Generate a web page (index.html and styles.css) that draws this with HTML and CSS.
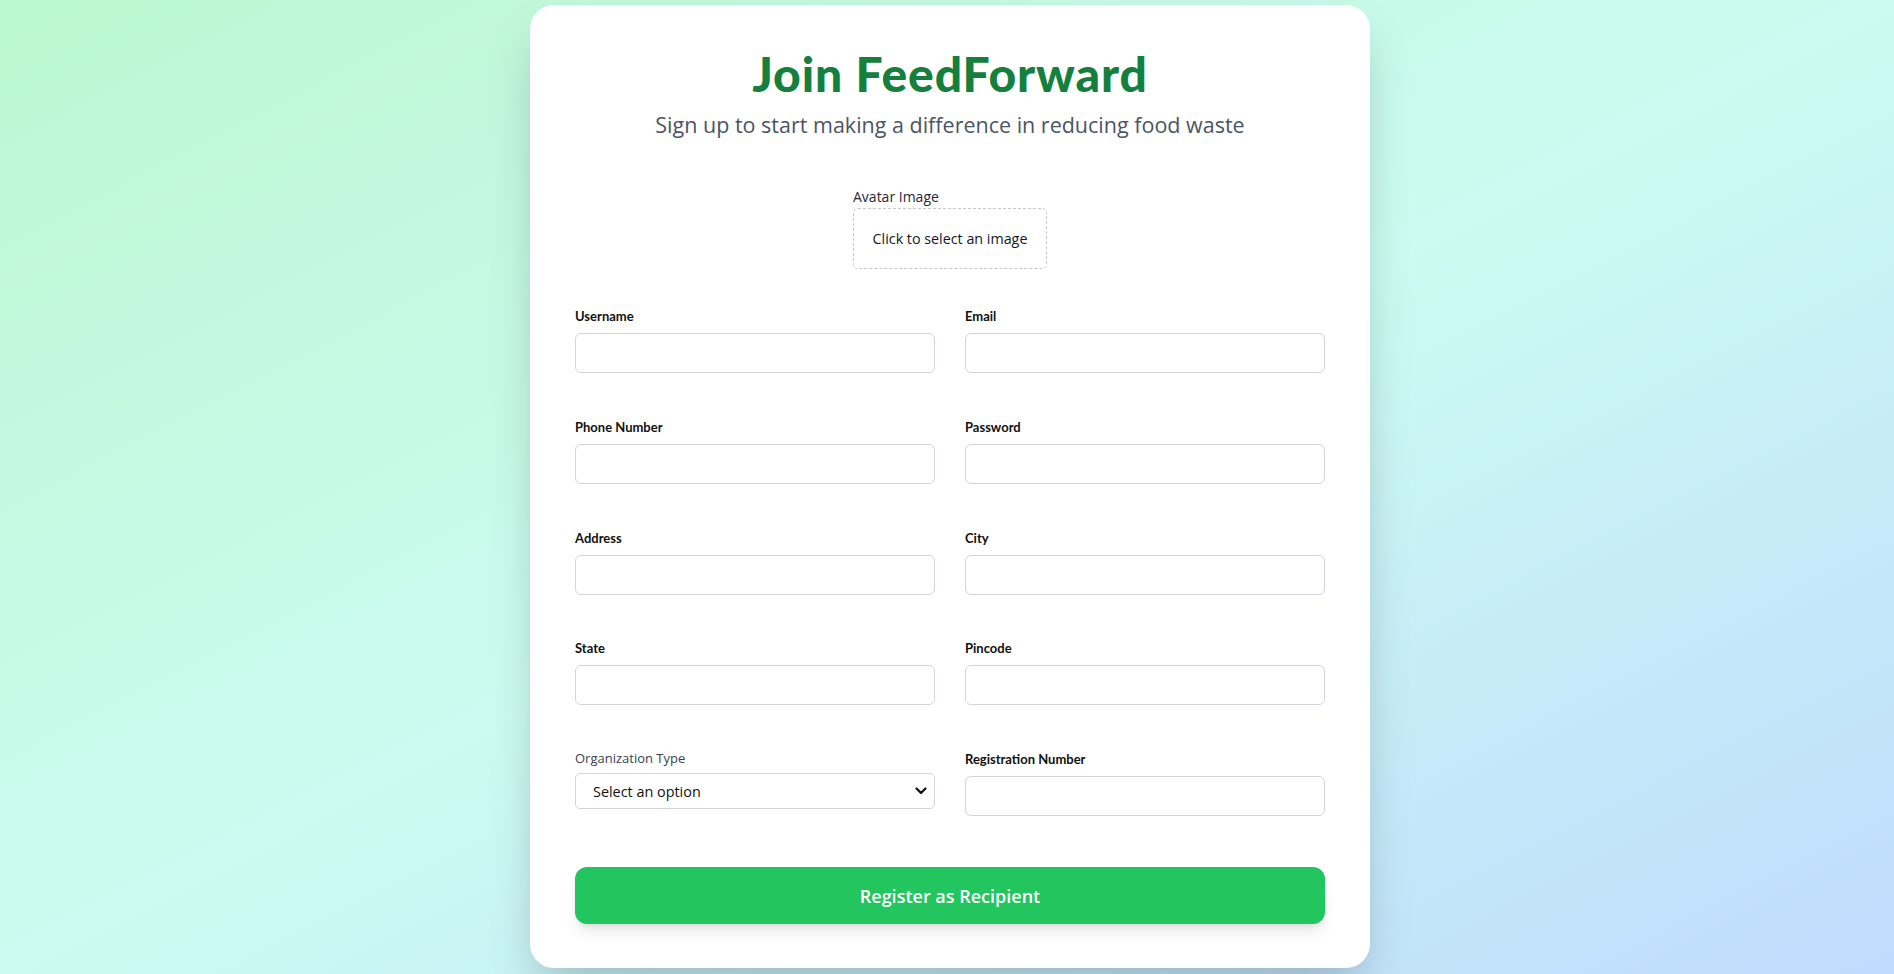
FILE: index.html
```html
<!DOCTYPE html>
<html lang="en">
<head>
<meta charset="utf-8">
<title>Join FeedForward</title>
<link rel="stylesheet" href="styles.css">
</head>
<body>
<main class="page">
  <section class="card">
    <header class="header">
      <h1 class="title">Join FeedForward</h1>
      <p class="subtitle">Sign up to start making a difference in reducing food waste</p>
    </header>

    <form class="form">
      <div class="avatar">
        <div class="avatar-inner">
          <span class="avatar-label">Avatar Image</span>
          <div class="avatar-box">Click to select an image</div>
        </div>
      </div>

      <div class="grid">
        <div class="field">
          <label class="label">Username</label>
          <input class="input" type="text">
        </div>
        <div class="field">
          <label class="label">Email</label>
          <input class="input" type="email">
        </div>
        <div class="field">
          <label class="label">Phone Number</label>
          <input class="input" type="text">
        </div>
        <div class="field">
          <label class="label">Password</label>
          <input class="input" type="password">
        </div>
        <div class="field">
          <label class="label">Address</label>
          <input class="input" type="text">
        </div>
        <div class="field">
          <label class="label">City</label>
          <input class="input" type="text">
        </div>
        <div class="field">
          <label class="label">State</label>
          <input class="input" type="text">
        </div>
        <div class="field">
          <label class="label">Pincode</label>
          <input class="input" type="text">
        </div>
        <div class="field">
          <label class="label-muted">Organization Type</label>
          <div class="select-wrap">
            <select class="select">
              <option>Select an option</option>
            </select>
            <svg class="chevron" width="12" height="8" viewBox="0 0 12 8" aria-hidden="true"><path d="M1.5 1.5 L6 6 L10.5 1.5" fill="none" stroke="#111" stroke-width="2.2" stroke-linecap="round" stroke-linejoin="round"/></svg>
          </div>
        </div>
        <div class="field">
          <label class="label">Registration Number</label>
          <input class="input" type="text">
        </div>
      </div>

      <button class="submit" type="button">Register as Recipient</button>
    </form>
  </section>
</main>
</body>
</html>
```

FILE: styles.css
```css
* { box-sizing: border-box; }

html, body {
  margin: 0;
  padding: 0;
}

body {
  font-family: "Open Sans", "Noto Sans", sans-serif;
  color: #111827;
  background: linear-gradient(to bottom right, #bbf7d0 0%, #ccfbf1 50%, #bfdbfe 100%);
  min-height: 100vh;
}

.page {
  min-height: 100vh;
  display: flex;
  justify-content: center;
  align-items: flex-start;
  padding: 5px 0 5px 6px;
}

.card {
  width: 840px;
  background: #ffffff;
  border-radius: 24px;
  padding: 45px 45px 44px;
  box-shadow: 0 25px 50px -12px rgba(0, 0, 0, 0.25);
}

.header {
  text-align: center;
  margin-bottom: 48px;
}

.title {
  margin: 0;
  font-family: "Lato", sans-serif;
  font-weight: 900;
  font-size: 48px;
  line-height: 48px;
  letter-spacing: 0.9px;
  color: #15803d;
}

.subtitle {
  margin: 13px 0 0;
  font-size: 21.5px;
  line-height: 28px;
  color: #4b5563;
}

.form {
  display: flex;
  flex-direction: column;
}

.avatar {
  display: flex;
  justify-content: center;
  margin-bottom: 37px;
}

.avatar-inner {
  display: flex;
  flex-direction: column;
  align-items: flex-start;
}

.avatar-label {
  font-size: 14px;
  line-height: 20px;
  color: #1f2937;
  margin-bottom: 1px;
}

.avatar-box {
  width: 194px;
  height: 61px;
  border: 1px dashed #c7c7c7;
  border-radius: 5px;
  display: flex;
  align-items: center;
  justify-content: center;
  font-size: 14.3px;
  color: #111827;
}

.grid {
  display: grid;
  grid-template-columns: 1fr 1fr;
  column-gap: 30px;
  row-gap: 43.75px;
}

.field {
  display: flex;
  flex-direction: column;
}

.label {
  font-family: "Lato", sans-serif;
  font-weight: 700;
  font-size: 13px;
  line-height: 20px;
  color: #111111;
  margin-bottom: 7px;
}

.label-muted {
  font-size: 13px;
  line-height: 18px;
  color: #374151;
  margin-bottom: 6px;
}

.input {
  height: 40px;
  width: 100%;
  border: 1px solid #d1d5db;
  border-radius: 6px;
  background: #fff;
  font: inherit;
  padding: 0 12px;
}

.select-wrap {
  position: relative;
}

.select {
  appearance: none;
  -webkit-appearance: none;
  width: 100%;
  height: 36px;
  border: 1px solid #d1d5db;
  border-radius: 5px;
  background: #fff;
  font-family: "Open Sans", sans-serif;
  font-size: 14.4px;
  color: #111;
  padding: 0 30px 0 17px;
}

.chevron {
  position: absolute;
  right: 8px;
  top: 14px;
}

.submit {
  margin-top: 51px;
  height: 57px;
  width: 100%;
  border: none;
  border-radius: 12px;
  background: #22c55e;
  color: #fff;
  font-family: "Open Sans", sans-serif;
  font-weight: 600;
  font-size: 18px;
  box-shadow: 0 10px 15px -3px rgba(0, 0, 0, 0.1), 0 4px 6px -4px rgba(0, 0, 0, 0.1);
  cursor: pointer;
}
```
